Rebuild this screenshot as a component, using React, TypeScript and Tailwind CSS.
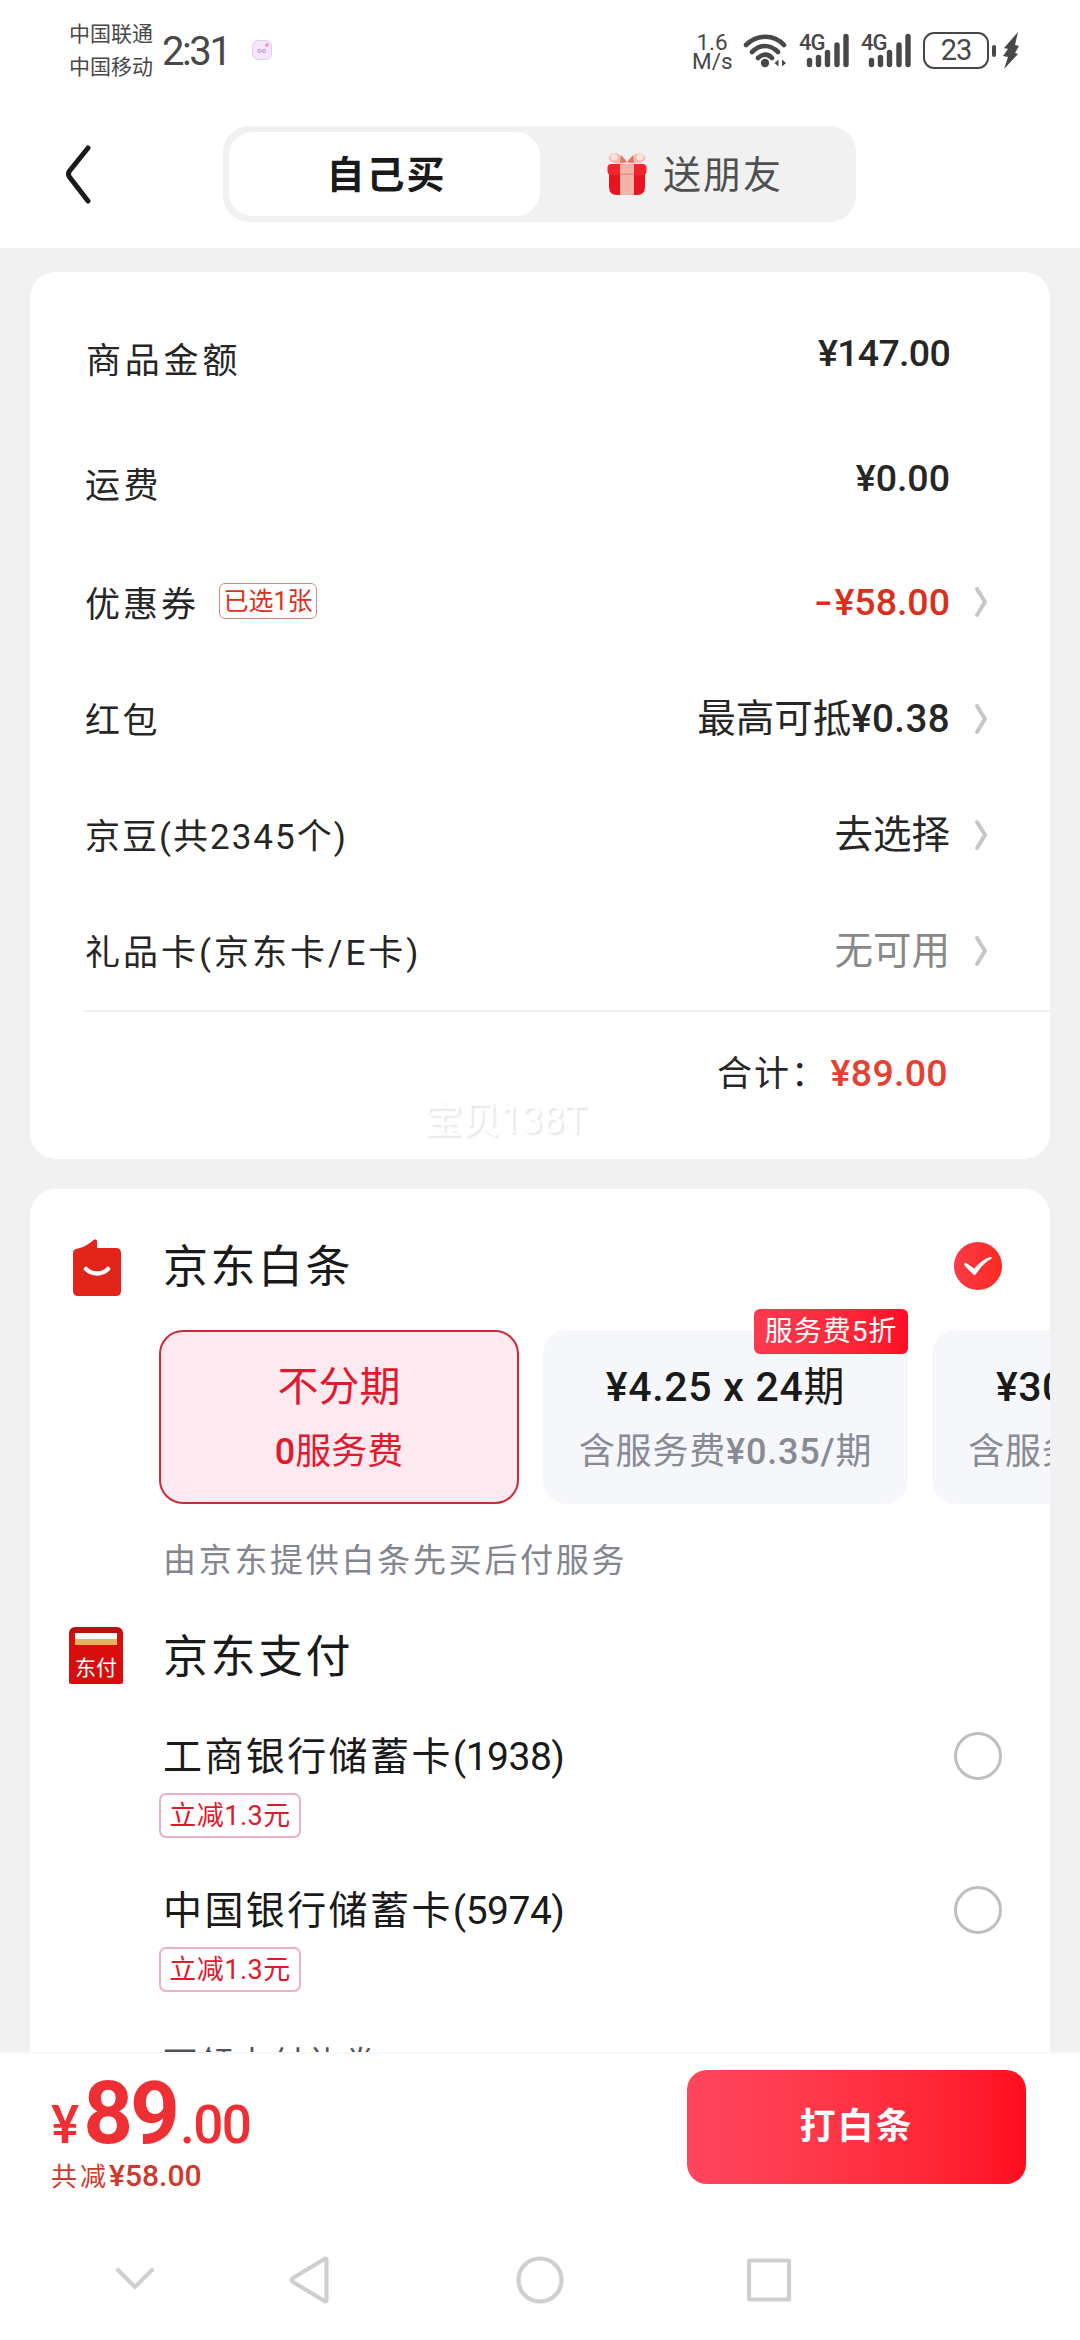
import { useState } from 'react'
import type { ReactNode } from 'react'

type PriceRow = {
    label: string
    value: ReactNode
    tag?: string
    valueClass?: string
    labelClass?: string
    height: string
    arrow?: boolean
}

type BankCard = {
    id: string
    name: string
    discount: string
}

const priceRows: PriceRow[] = [
    { label: '商品金额', value: '¥147.00', height: 'h-[125px]', labelClass: 'pt-3 pl-px tracking-[3.800px]', valueClass: 'font-medium pb-1 tracking-[-0.7px]' },
    { label: '运费', value: '¥0.00', height: 'h-[125px]', labelClass: 'pt-3 tracking-[3.500px]', valueClass: 'font-medium pb-1' },
    { label: '优惠券', value: <><span className="mr-[5px] inline-block scale-x-140">-</span>¥58.00</>, tag: '已选1张', height: 'h-[118px]', labelClass: 'pt-1.5 tracking-[3px]', valueClass: 'font-medium text-[#d8301b] pt-0.5', arrow: true },
    { label: '红包', value: <>最高可抵<span className="font-medium tracking-[0.400px]">¥0.38</span></>, height: 'h-[116px]', labelClass: 'pt-1 tracking-[2.500px]', valueClass: 'text-[38.500px]', arrow: true },
    { label: '京豆(共2345个)', value: '去选择', height: 'h-[116px]', labelClass: 'pt-1 tracking-[2px]', valueClass: 'text-[38.500px]', arrow: true },
    { label: '礼品卡(京东卡/E卡)', value: '无可用', height: 'h-[116px]', labelClass: 'pt-1 tracking-[3px]', valueClass: 'text-[38.500px] text-[#888888]', arrow: true },
]

const bankCards: BankCard[] = [
    { id: '1938', name: '工商银行储蓄卡', discount: '立减1.3元' },
    { id: '5974', name: '中国银行储蓄卡', discount: '立减1.3元' },
]

function SignalBars() {
    return (
        <div className="relative w-[51px] h-[36px]">
            <span className="absolute left-0 -top-px text-[22px] leading-[22px] font-medium tracking-[-1px]">4G</span>
            <svg className="absolute left-0 top-0" width="51" height="36" viewBox="0 0 51 36" stroke="currentColor" strokeWidth="5.4" strokeLinecap="round">
                <path d="M10.5 27.5v4M19.5 24.5v7M28.5 19.5v12M38 12v19.500M47 3.500v28" />
            </svg>
        </div>
    )
}

function StatusBar() {
    return (
        <div className="flex items-start h-[104px] pl-[69px] pr-[60px] text-[#484848]">
            <div className="flex flex-col pt-[18px] text-[21px] leading-[33px]">
                <span>中国联通</span>
                <span>中国移动</span>
            </div>
            <div className="pt-[30px] pl-[9px] text-[40px] leading-[44px] tracking-[-2.400px]">2:31</div>
            <div className="mt-10 ml-[22px] w-5 h-5 rounded-md border border-[#e3cdf0] bg-[#f6e6fb] flex items-center justify-center">
                <svg width="14" height="14" viewBox="0 0 14 14" fill="none" stroke="#c9a6dc" strokeWidth="1.300">
                    <circle cx="4.500" cy="8" r="1.500" />
                    <circle cx="9" cy="8" r="1.500" />
                    <path d="M12 0v4M10 2h4" stroke="#ec8fb4" />
                </svg>
            </div>
            <div className="ml-auto flex items-start pt-[33px]">
                <div className="w-[40px] text-[22.500px] leading-[19px] text-center">
                    <div>1.6</div>
                    <div>M/s</div>
                </div>
                <svg className="ml-[11px]" width="46" height="36" viewBox="0 0 46 36" fill="none" stroke="currentColor" strokeWidth="4.600" strokeLinecap="round">
                    <path d="M3 12C14 1 31 1 41 12M9 19c8-8 18-8 26 0M15 25c4.500-4.500 10-4.500 14 0" />
                    <circle cx="22" cy="30" r="4.200" fill="currentColor" stroke="none" />
                    <path d="M31.500 30l4-3.500v7zM43 30l-4-3.500v7z" fill="currentColor" stroke="none" />
                </svg>
                <div className="ml-[10px]"><SignalBars /></div>
                <div className="ml-[11px]"><SignalBars /></div>
                <div className="ml-[11px] w-[66px] h-[37px] -mt-px rounded-[11px] border-[2.500px] border-current flex items-center justify-center text-[29px] leading-none tracking-[-1px]">23</div>
                <div className="ml-[3px] mt-[12px] w-[4px] h-[12px] rounded-full bg-current" />
                <svg className="ml-[6px] -mt-px" width="18" height="38" viewBox="0 0 18 38" fill="currentColor">
                    <path d="M16 0L2 16l4 1-5 7 5 1-4 12 14-15-3-1 4-7-4-1z" />
                </svg>
            </div>
        </div>
    )
}

function GiftIcon() {
    return (
        <svg width="40" height="44" viewBox="0 0 40 44">
            <path d="M20 11C14 12 3 12 2 7 1 1 9 0 13 3c3 2 6 5 7 8zM20 11c6 1 17 1 18-4C39 1 31 0 27 3c-3 2-6 5-7 8z" fill="#f3b9aa" />
            <circle cx="7" cy="5" r="3.500" fill="#fbe3dc" />
            <circle cx="33" cy="5" r="3.500" fill="#fbe3dc" />
            <path d="M20 10l-6-7-1 8zM20 10l6-7 1 8z" fill="#d97a6c" />
            <path d="M2 20h36v15q0 8-8 8H10q-8 0-8-8z" fill="#e8141f" />
            <rect x="0.500" y="12" width="39" height="11" rx="4" fill="#f0242d" />
            <rect x="13" y="12" width="14" height="31" fill="#f7b3a6" />
            <rect x="13" y="21.500" width="14" height="1.500" fill="#e58f84" />
        </svg>
    )
}

function Chevron() {
    return (
        <svg className="ml-[24px]" width="14" height="32" viewBox="0 0 14 32" fill="none" stroke="#c6c6c6" strokeWidth="4" strokeLinecap="round" strokeLinejoin="round">
            <path d="M3 3l8 13-8 13" />
        </svg>
    )
}

function BaitiaoIcon() {
    return (
        <svg width="48" height="57" viewBox="0 0 48 57">
            <path d="M5 9.500C12 8 17 4 20.500 1c1.500-1 3.500-.5 3.500 1.500V9h19q5 0 5 5v38q0 5-5 5H5q-5 0-5-5V14q0-4 5-4.500z" fill="#e1251b" />
            <path d="M13 30c6 6 16 6 22 0" fill="none" stroke="#fff" strokeWidth="4.500" strokeLinecap="round" />
        </svg>
    )
}

function PayIcon() {
    return (
        <div className="w-[54px] h-[57px] rounded-t-[6px] rounded-b-[2px] bg-[#d70e0d] border-t-[6px] border-[#bb0f12] flex flex-col items-center">
            <div className="w-[42px] h-[6px] flex-shrink-0 bg-white" />
            <div className="w-[42px] h-[6px] flex-shrink-0 bg-[#e6b262]" />
            <div className="mt-[13px] text-[21px] leading-[21px] text-white">东付</div>
        </div>
    )
}

function Radio({ checked, onClick }: { checked: boolean; onClick: () => void }) {
    if (checked) {
        return (
            <button onClick={onClick} className="w-12 h-12 rounded-full bg-linear-to-r from-[#fb3a44] to-[#fb2a20] flex items-center justify-center">
                <svg width="30" height="22" viewBox="0 0 30 22">
                    <path d="M1 9.500c0-2 2-2 3-1l7 5C16 8 21 4 27 2c2-.5 2.500 1 1 2-7 4-10 8-15 15-1 1.500-2 1.500-3 0-3-3-6-5-9-9.500z" fill="#fff" />
                </svg>
            </button>
        )
    }
    return <button onClick={onClick} className="w-12 h-12 rounded-full border-[3px] border-[#bfbfbf]" />
}

export default function App() {
    const [tab, setTab] = useState<'self' | 'friend'>('self')
    const [payment, setPayment] = useState('baitiao')

    return (
        <div className="w-[1080px] h-[2340px] overflow-hidden flex flex-col bg-[#f1f1f1] text-[#262626] [font-family:Roboto,'Noto_Sans_CJK_SC',sans-serif]">
            {/* Header */}
            <div className="h-[248px] flex-shrink-0 bg-white">
                <StatusBar />
                <div className="flex items-center mt-[22px] pl-[64px]">
                    <svg width="28" height="60" viewBox="0 0 28 60" fill="none" stroke="#1a1a1a" strokeWidth="5" strokeLinecap="round" strokeLinejoin="round">
                        <path d="M24 4L5.500 27q-2 3 0 6L24 57" />
                    </svg>
                    <div className="ml-[131px] w-[633px] h-24 p-[6px] rounded-[26px] bg-[#f1f1f1] flex">
                        <button
                            onClick={() => setTab('self')}
                            className={`w-[311px] h-[84px] rounded-[24px] text-[38px] leading-none tracking-[2px] font-bold text-[#1a1a1a] pl-1 pt-0.5 ${tab === 'self' ? 'bg-white' : ''}`}
                        >
                            自己买
                        </button>
                        <button
                            onClick={() => setTab('friend')}
                            className={`flex-1 h-[84px] rounded-[24px] flex items-center pl-[67px] text-[38px] leading-none tracking-[2px] text-[#505050] ${tab === 'friend' ? 'bg-white' : ''}`}
                        >
                            <GiftIcon />
                            <span className="ml-4 pt-0.5">送朋友</span>
                        </button>
                    </div>
                </div>
            </div>

            {/* Content */}
            <div className="h-[1804px] flex-shrink-0 overflow-hidden px-[30px] pt-6">
                {/* Price details */}
                <div className="relative h-[887px] rounded-[26px] bg-white pt-[21px] text-[37.500px] leading-none">
                    {priceRows.map(row => (
                        <div key={row.label} className={`flex items-center pl-[55px] pr-[62px] ${row.height}`}>
                            <div className={`flex items-center text-[35px] ${row.labelClass ?? ''}`}>
                                {row.label}
                                {row.tag && (
                                    <span className="ml-[20px] w-[98px] h-9 -mt-2 rounded-[6px] border border-[#cf8a80] text-[25px] tracking-normal text-[#df301a] flex items-center justify-center">
                                        {row.tag}
                                    </span>
                                )}
                            </div>
                            <div className={`ml-auto ${row.arrow ? '' : 'pr-[38px]'} ${row.valueClass ?? ''}`}>{row.value}</div>
                            {row.arrow && <Chevron />}
                        </div>
                    ))}
                    <div className="ml-[54px] h-[2px] mt-[1px] bg-[#efefef]" />
                    <div className="flex items-center h-[124px] pr-[102px]">
                        <span className="ml-auto text-[35px] tracking-[2px]">合计：</span>
                        <span className="w-[120px] text-right font-medium text-[#e64032] tracking-[0.300px] whitespace-nowrap">¥89.00</span>
                    </div>
                    <span className="absolute left-[394px] top-[829px] text-[38px] text-white [text-shadow:2px_2px_2px_#e6e6e6]">宝贝138T</span>
                </div>

                {/* Payment methods */}
                <div className="relative mt-[30px] h-[900px] rounded-t-[26px] bg-white overflow-hidden text-[#1a1a1a]">
                    <div className="flex items-center pt-[50px] pl-[43px] pr-[48px] h-[106px]">
                        <BaitiaoIcon />
                        <span className="ml-[42px] text-[45px] leading-none tracking-[2.500px]">京东白条</span>
                        <div className="ml-auto -mt-[3px] h-12">
                            <Radio checked={payment === 'baitiao'} onClick={() => setPayment('baitiao')} />
                        </div>
                    </div>

                    {/* Installments */}
                    <div className="flex gap-6 mt-[35px] pl-[129px] whitespace-nowrap">
                        <div className="w-[360px] h-[174px] flex-shrink-0 rounded-[24px] border-2 border-[#c92a3a] bg-[#fdeaf1] text-[#e01a2e] flex flex-col items-center">
                            <span className="mt-[34px] text-[41px] leading-[42px]">不分期</span>
                            <span className="mt-[23px] text-[36px] leading-[42px]"><b className="font-medium">0</b>服务费</span>
                        </div>
                        <div className="relative w-[365px] h-[174px] flex-shrink-0 rounded-[24px] bg-[#f6f7fb] flex flex-col items-center">
                            <span className="mt-[36px] text-[41px] leading-[42px] tracking-[0.700px]"><b className="font-medium">¥4.25 x 24</b>期</span>
                            <span className="mt-[23px] text-[36px] leading-[42px] tracking-[0.800px] text-[#888b94]">含服务费<b className="font-medium">¥0.35/</b>期</span>
                            <span className="absolute right-0 -top-[21px] w-[154px] h-[45px] rounded-[6px] bg-linear-to-r from-[#fb3a50] to-[#ff0c24] text-white text-[28px] leading-[45px] tracking-[1px] text-center">服务费5折</span>
                        </div>
                        <div className="w-[365px] h-[174px] flex-shrink-0 rounded-[24px] bg-[#f6f7fb] flex flex-col items-center">
                            <span className="mt-[36px] text-[41px] leading-[42px] tracking-[0.500px]"><b className="font-medium">¥30.11 x 3</b>期</span>
                            <span className="mt-[23px] text-[36px] leading-[42px] tracking-[0.700px] text-[#888b94]">含服务费<b className="font-medium">¥0.44/</b>期</span>
                        </div>
                    </div>
                    <p className="mt-[36px] pl-[133px] text-[33px] leading-[42px] tracking-[2.700px] text-[#84868f]">由京东提供白条先买后付服务</p>

                    <div className="flex items-center pl-[39px] mt-[45px] h-[57px]">
                        <PayIcon />
                        <span className="ml-[40px] pt-1 text-[45px] leading-none tracking-[2.500px]">京东支付</span>
                    </div>

                    {bankCards.map(card => (
                        <div key={card.id} className="h-[154px] pt-12 pl-[129px] pr-[48px]">
                            <div className="flex items-center justify-between h-12">
                                <span className="pl-[4px] pt-0.5 text-[39px] leading-none tracking-[2.400px]">
                                    {card.name}
                                    <span className="tracking-[-0.500px]">({card.id})</span>
                                </span>
                                <Radio checked={payment === card.id} onClick={() => setPayment(card.id)} />
                            </div>
                            <div className="mt-[13px] w-[142px] h-[45px] rounded-[7px] border-2 border-[#ecb0c0] text-[27px] leading-[42px] text-center text-[#e2182c] tracking-[0.500px]">
                                {card.discount}
                            </div>
                        </div>
                    ))}
                    <p className="mt-[51px] pl-[133px] text-[34px] leading-[42px] tracking-[2px] text-[#505259]">可领支付礼券›</p>
                </div>
            </div>

            {/* Submit bar */}
            <div className="h-[288px] flex-shrink-0 bg-white border-t-2 border-[#f7f7f7]">
                <div className="flex justify-between h-[130px] pl-[51px] pr-[54px]">
                    <div className="pt-[14px]">
                        <div className="flex items-baseline h-[93px] text-[#ee3034] leading-[90px] font-medium">
                            <span className="text-[53px]">¥</span>
                            <span className="ml-[4px] text-[87px] font-bold tracking-[-3px]">89</span>
                            <span className="ml-[3px] text-[53px] tracking-[-1.500px]">.00</span>
                        </div>
                        <div className="text-[30px] leading-[30px] text-[#d2372b]">
                            <span className="text-[26px] tracking-[3px]">共减</span>
                            <span className="font-medium">¥58.00</span>
                        </div>
                    </div>
                    <button className="mt-4 w-[339px] h-[114px] flex-shrink-0 rounded-[20px] bg-linear-to-r from-[#ff465e] to-[#ff0c1f] text-white text-[36px] leading-none font-bold tracking-[2px]">
                        打白条
                    </button>
                </div>

                {/* Navigation keys */}
                <svg className="mt-[61px]" width="1080" height="70" viewBox="0 0 1080 70" fill="none" stroke="#cfcfcf" strokeWidth="4.200" strokeLinecap="round" strokeLinejoin="round">
                    <path d="M118 25l17 17 17-17" />
                    <path d="M324.500 14q2-1 2 1v40q0 2-2 1L293 37q-3-2 0-4z" />
                    <circle cx="540" cy="35" r="21.500" />
                    <rect x="749" y="15.500" width="40" height="39" rx="1" />
                </svg>
            </div>
        </div>
    )
}
